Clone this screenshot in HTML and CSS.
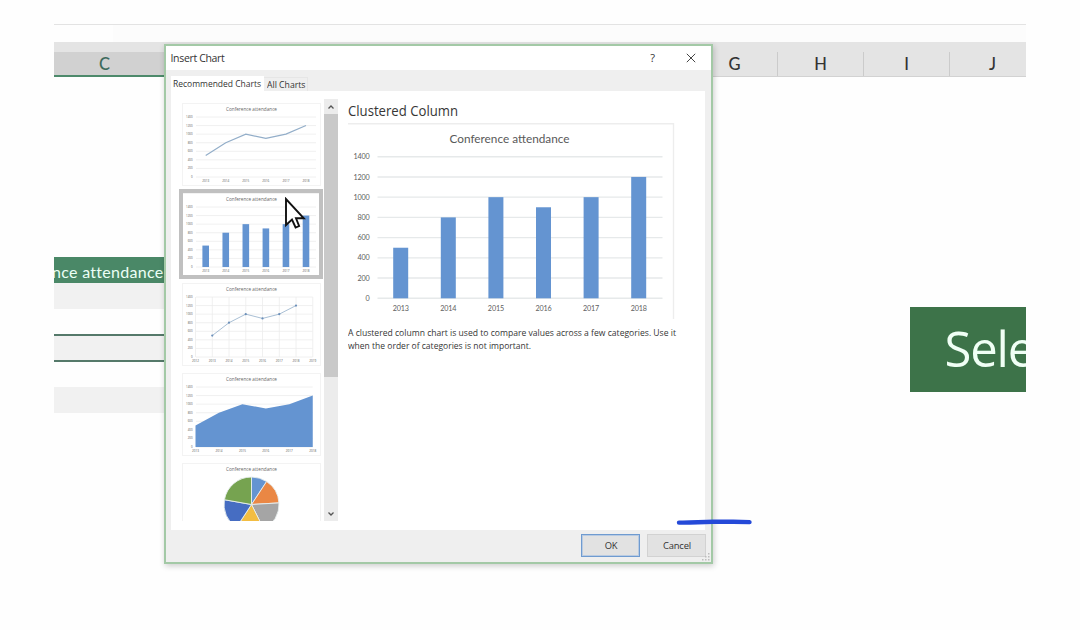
FILE: index.html
```html
<!DOCTYPE html>
<html lang="en">
<head>
<meta charset="utf-8">
<title>Insert Chart</title>
<link rel="stylesheet" href="styles.css">
</head>
<body>
<main class="sheet">
  <div class="ribbon-edge"></div>
  <div class="formula-bar"></div>
  <div class="columns">
    <div class="col col-active"><span>C</span></div>
    <div class="col-gap"></div>
    <div class="col">G</div>
    <div class="col">H</div>
    <div class="col">I</div>
    <div class="col">J</div>
  </div>
  <div class="cells">
    <div class="cell-head"><span>nce attendance</span></div>
    <div class="cell shaded"></div>
    <div class="cell"></div>
    <div class="cell shaded selected"></div>
    <div class="cell"></div>
    <div class="cell shaded"></div>
  </div>
  <div class="callout">Sele</div>
</main>

<section class="dialog">
  <header class="titlebar">
    <span class="title">Insert Chart</span>
    <span class="help">?</span>
    <svg class="close" width="10" height="10" viewBox="0 0 10 10"><path d="M.8.8 9.2 9.2M9.2.8.8 9.2"/></svg>
  </header>
  <nav class="tabs">
    <span class="tab tab-on"><svg width="92" height="15"><text x="0" y="10.5" textLength="88" lengthAdjust="spacingAndGlyphs">Recommended Charts</text></svg></span>
    <span class="tab tab-off"><svg width="40" height="13"><text x="0" y="10" textLength="38.5" lengthAdjust="spacingAndGlyphs">All Charts</text></svg></span>
  </nav>
  <div class="content">
    <div class="list">
      <div class="item"><svg class="thumb" data-kind="line" viewBox="0 0 144 90"></svg></div>
      <div class="item"><svg class="thumb picked" data-kind="column" viewBox="0 0 144 90"></svg></div>
      <div class="item"><svg class="thumb" data-kind="scatter" viewBox="0 0 144 90"></svg></div>
      <div class="item"><svg class="thumb" data-kind="area" viewBox="0 0 144 90"></svg></div>
      <div class="item"><svg class="thumb" data-kind="pie" viewBox="0 0 144 90"></svg></div>
    </div>
    <div class="scroll">
      <div class="arrow up"><svg width="8" height="6" viewBox="0 0 8 6"><path d="M1.5 4.5 4 2 6.5 4.5"/></svg></div>
      <div class="grip"></div>
      <div class="arrow"><svg width="8" height="6" viewBox="0 0 8 6"><path d="M1.5 1.5 4 4 6.5 1.5"/></svg></div>
    </div>
    <div class="preview">
      <h1><svg width="120" height="20"><text x="0" y="15.5" textLength="110" lengthAdjust="spacingAndGlyphs">Clustered Column</text></svg></h1>
      <svg class="big" id="big" width="327" height="197" viewBox="0 0 327 197"></svg>
      <svg class="desc" width="340" height="30">
        <text x="0" y="12" textLength="328" lengthAdjust="spacingAndGlyphs">A clustered column chart is used to compare values across a few categories. Use it</text>
        <text x="0" y="25" textLength="183" lengthAdjust="spacingAndGlyphs">when the order of categories is not important.</text>
      </svg>
    </div>
  </div>
  <footer class="actions">
    <button class="btn btn-ok">OK</button>
    <button class="btn">Cancel</button>
  </footer>
  <svg class="resize" width="8" height="8" viewBox="0 0 8 8"><path d="M6 0h1.5v1.5H6zM6 3h1.5v1.5H6zM6 6h1.5v1.5H6zM3 3h1.5v1.5H3zM3 6h1.5v1.5H3zM0 6h1.5v1.5H0z"/></svg>
</section>

<svg class="pen" width="80" height="10" viewBox="0 0 80 10"><path d="M4 5.6C18 6 26 4.5 40 4.7S62 4.300 74.5 5.1"/></svg>
<svg class="cursor" width="24" height="34" viewBox="0 0 24 34"><path d="M2 2V28L8 22.5 11.6 30.500 15.100 29 12 21.300H19.800Z"/></svg>
<script src="charts.js"></script>
</body>
</html>
```
FILE: styles.css
```css
* { box-sizing: border-box; }
body {
  margin: 0;
  width: 1080px;
  height: 630px;
  overflow: hidden;
  background: #fefefe;
  font-family: "Open Sans", "Noto Sans", sans-serif;
  color: #333;
}
svg { display: block; }

.sheet {
  position: relative;
  width: 972px;
  height: 630px;
  margin-left: 54px;
  overflow: hidden;
}
.ribbon-edge { height: 25px; border-bottom: 1px solid #e3e3e3; }
.formula-bar { height: 17px; margin-left: 59px; background: #fcfcfc; }
.columns {
  display: flex;
  height: 35px;
  padding-top: 10px;
  background: #e4e4e4;
  border-bottom: 1px solid #d2d2d2;
}
.col {
  flex: 0 0 86px;
  height: 24px;
  border-right: 1px solid #cbcbcb;
  text-align: center;
  font-family: Lato, "Open Sans", sans-serif;
  font-size: 16.5px;
  font-weight: 500;
  line-height: 25px;
  color: #333;
}
.col-active {
  flex-basis: 111px;
  height: 25px;
  padding-right: 10px;
  border: 0;
  border-bottom: 2px solid #4d8a6b;
  background: #d1d1d1;
  color: #3d6a5c;
}
.col-gap { flex: 0 0 527px; }
.cells { width: 112px; padding-top: 180px; }
.cell-head {
  height: 26px;
  overflow: hidden;
  background: #4a8867;
  color: #ecfff6;
  font-family: Lato, "Open Sans", sans-serif;
  font-size: 16px;
  line-height: 30px;
  white-space: nowrap;
}
.cell-head span { display: block; margin-left: -2px; letter-spacing: .3px; }
.cell { height: 26px; }
.shaded { background: #f1f1f1; }
.selected {
  height: 28px;
  margin-top: -1px;
  margin-bottom: -1px;
  border: solid #55796a;
  border-width: 2px 0;
}
.callout {
  position: absolute;
  left: 856px;
  top: 307px;
  width: 116px;
  height: 85px;
  padding-left: 34.5px;
  overflow: hidden;
  background: #3d7349;
  color: #f0fff5;
  font-size: 49px;
  line-height: 82px;
  letter-spacing: -1.2px;
}

.dialog {
  position: absolute;
  left: 164px;
  top: 44px;
  width: 549px;
  height: 520px;
  display: flex;
  flex-direction: column;
  border: 2px solid #a3c9a6;
  background: #efefef;
  box-shadow: 1px 2px 6px rgba(0, 0, 0, .2);
}
.titlebar {
  display: flex;
  align-items: center;
  height: 24px;
  padding: 0 15px 0 4.5px;
  background: #fff;
  font-size: 10.5px;
}
.title { flex: 1; letter-spacing: -.33px; }
.help { margin-right: 31px; padding-bottom: 2px; font-size: 11px; }
.close path { fill: none; stroke: #444; stroke-width: 1; }
.tabs { display: flex; align-items: flex-end; height: 21px; padding-left: 5px; font-size: 9.5px; white-space: nowrap; }
.tabs text { fill: #333; }
.tab-on { width: 93px; height: 15px; padding-left: 2px; background: #fff; }
.tab-off { width: 44px; height: 14px; padding-left: 3px; border: 1px solid #e6e6e6; border-bottom: 0; border-left: 0; }
.content { display: flex; height: 439px; margin: 0 6px 0 5px; padding: 8px 0 9px 8px; background: #fff; }
.list { width: 145px; overflow: hidden; }
.item { height: 90px; }
.thumb { width: 144px; height: 90px; }
.picked { outline: 4px solid #c0c0c0; outline-offset: -4px; }
.scroll { display: flex; flex-direction: column; width: 14px; background: #ececec; }
.arrow { display: flex; align-items: center; justify-content: center; height: 15px; }
.arrow path { fill: none; stroke: #555; stroke-width: 1.3; }
.grip { height: 263px; margin-bottom: 129px; background: #c9c9c9; }
.preview { padding: 1px 0 0 10px; }
.preview h1 { margin: 0; height: 23px; font-size: 14.2px; font-weight: 400; }
.preview text { fill: #363636; }
.desc { margin-top: 4px; font-size: 9px; }
.actions { display: flex; justify-content: flex-end; gap: 7px; padding: 4px 5px 0 0; }
.btn {
  width: 59px;
  height: 23px;
  padding: 0 0 0 1px;
  border: 1px solid #d2d2d2;
  background: #e2e2e2;
  font-family: inherit;
  font-size: 9.4px;
  letter-spacing: -.2px;
  line-height: 22px;
  color: #333;
}
.btn-ok { border: 1.5px solid #6f9bd0; box-shadow: inset 0 0 0 1px #b9cbe2; }
.resize { position: absolute; right: 1px; bottom: 1px; }
.resize path { fill: #bdbdbd; }

.pen { position: absolute; left: 675px; top: 517px; }
.pen path { fill: none; stroke: #2449d8; stroke-width: 4.4; stroke-linecap: round; }
.cursor { position: absolute; left: 284px; top: 197px; }
.cursor path { fill: #fff; stroke: #111; stroke-width: 1.9; stroke-linejoin: miter; }

.frame { fill: none; stroke: #f3f3f3; }
.grid { fill: none; stroke: #ececec; stroke-width: .8; }
.big .grid { stroke: #e6e9ea; stroke-width: 1.4; }
.big .frame { stroke: #ededed; stroke-width: 1.4; }
.bar, .area { fill: #6494d1; }
.series { fill: none; stroke: #93aec9; stroke-width: 1.2; }
.scatter { stroke-width: .8; }
.dot { fill: #6b8fba; }
.chart-title { font-size: 4.9px; text-anchor: middle; fill: #666; }
.tick { font-size: 2.8px; fill: #555; }
.tick-x { text-anchor: middle; }
.tick-y { text-anchor: end; }
.preview .chart-title { font-family: Lato, sans-serif; font-size: 12px; fill: #595959; }
.preview .tick { font-family: Lato, sans-serif; font-size: 7.2px; letter-spacing: -.15px; fill: #606060; }
.slice { stroke: #e8eeee; stroke-width: .9; }
```
FILE: charts.js
```javascript
const values = [500, 800, 1000, 900, 1000, 1200];
const years = [2013, 2014, 2015, 2016, 2017, 2018];
const text = (cls, x, y, s, extra = '') => `<text class="${cls}" x="${x}" y="${y}" ${extra}>${s}</text>`;

function axes(left, right, top, base, labelX, drop) {
  let out = '';
  for (let v = 0; v <= 1400; v += 200) {
    const y = base - (v / 1400) * (base - top);
    out += `<path class="grid" d="M${left} ${y}H${right}"/>` + text('tick tick-y', labelX, y + drop, v);
  }
  return out;
}

function thumb(kind) {
  const base = 78, top = 18;
  const yOf = v => base - (v / 1400) * (base - top);
  let out = '<rect class="frame" x="3.5" y="4.5" width="138" height="82"/>';
  out += text('chart-title', 72.5, 12, 'Conference attendance', 'textLength="51" lengthAdjust="spacingAndGlyphs"');
  if (kind === 'pie') {
    const colors = ['#6494d1', '#ea8744', '#a5a5a5', '#f3bd42', '#466dc2', '#76a350'];
    let angle = 0;
    values.forEach((v, i) => {
      const next = angle + (v / 5400) * Math.PI * 2;
      const at = a => `${72.5 + 27.5 * Math.sin(a)} ${45.5 - 27.5 * Math.cos(a)}`;
      out += `<path class="slice" fill="${colors[i]}" d="M72.5 45.5L${at(angle)}A27.5 27.5 0 0 1 ${at(next)}Z"/>`;
      angle = next;
    });
    return out;
  }
  const edge = kind === 'line' || kind === 'column';
  out += axes(17, edge ? 137 : 133.7, top, base, 13.5, 1);
  let xs = years.map((_, i) => 26.7 + i * 20.06);
  let labels = years;
  let labelXs = xs;
  if (kind === 'scatter') {
    labels = [2012, ...years, 2019];
    labelXs = labels.map((_, i) => 16.5 + i * 16.75);
    xs = labelXs.slice(1, 7);
    labelXs.forEach(x => { out += `<path class="grid" d="M${x} ${top}V${base}"/>`; });
  }
  if (kind === 'area') {
    xs = labelXs = years.map((_, i) => 16.5 + i * 23.45);
  }
  const pts = xs.map((x, i) => `${x},${yOf(values[i])}`).join(' ');
  if (kind === 'column') xs.forEach((x, i) => {
    out += `<rect class="bar" x="${x - 3.3}" y="${yOf(values[i])}" width="6.6" height="${base - yOf(values[i])}"/>`;
  });
  if (kind === 'area') out += `<polygon class="area" points="${xs[0]},${base} ${pts} ${xs[5]},${base}"/>`;
  if (kind === 'line' || kind === 'scatter') out += `<polyline class="series ${kind}" points="${pts}"/>`;
  if (kind === 'scatter') xs.forEach((x, i) => { out += `<circle class="dot" cx="${x}" cy="${yOf(values[i])}" r="1.1"/>`; });
  labels.forEach((l, i) => { out += text('tick tick-x', labelXs[i], 83.3, l, 'textLength="7" lengthAdjust="spacingAndGlyphs"'); });
  return out;
}

function preview() {
  const top = 33.7, base = 175.3;
  let out = '<path class="frame" d="M0 .8H325.5V196"/>';
  out += text('chart-title', 161.5, 19.5, 'Conference attendance', 'textLength="120" lengthAdjust="spacingAndGlyphs"');
  out += axes(29.5, 314.5, top, base, 21.5, 2.6);
  values.forEach((v, i) => {
    const h = (v / 1400) * (base - top), x = 52.7 + i * 47.6;
    out += `<rect class="bar" x="${x - 7.5}" y="${base - h}" width="15" height="${h}"/>`;
    out += text('tick tick-x', x, 188.2, years[i]);
  });
  return out;
}

document.querySelectorAll('.thumb').forEach(svg => { svg.innerHTML = thumb(svg.dataset.kind); });
document.getElementById('big').innerHTML = preview();
```
